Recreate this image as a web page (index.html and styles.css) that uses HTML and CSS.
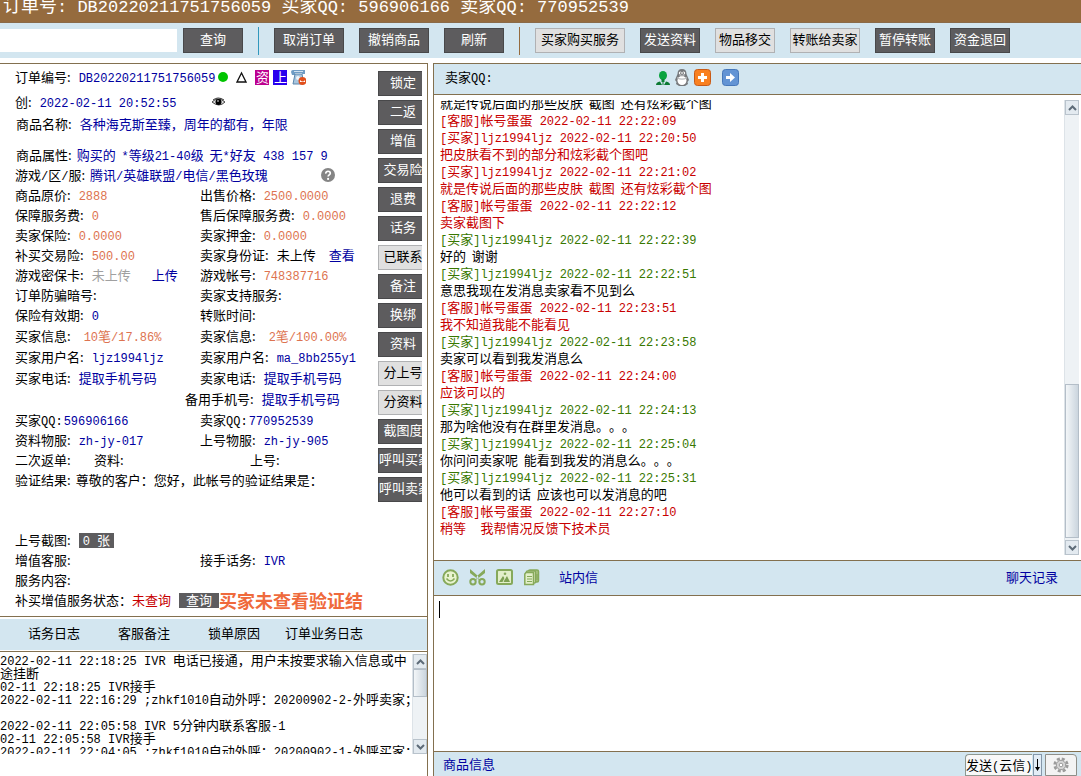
FILE: index.html
```html
<!DOCTYPE html>
<html lang="zh-CN">
<head>
<meta charset="utf-8">
<title>订单处理</title>
<link rel="stylesheet" href="styles.css">
</head>
<body>
<header class="title"><h1>订单号<span class="big">: DB20220211751756059 </span>买家<span class="big">QQ: 596906166 </span>卖家<span class="big">QQ: 770952539</span></h1></header>

<nav class="toolbar">
  <input class="search" type="text" aria-label="订单号">
  <button class="btn w60">查询</button>
  <span class="sep blue"></span>
  <button class="btn w70">取消订单</button>
  <button class="btn w70">撤销商品</button>
  <button class="btn w60">刷新</button>
  <span class="sep"></span>
  <button class="btn light w90">买家购买服务</button>
  <button class="btn w60">发送资料</button>
  <button class="btn light w60">物品移交</button>
  <button class="btn light w70">转账给卖家</button>
  <button class="btn w60">暂停转账</button>
  <button class="btn w60">资金退回</button>
</nav>

<main class="main">
  <section class="left">
    <div class="order">
      <div class="details">
        <div class="row"><span class="lb">订单编号:</span><span class="n v">DB20220211751756059</span>
          <span class="marks">
            <svg width="10" height="10" viewBox="0 0 10 10"><circle cx="5" cy="5" r="5" fill="#00c400"/></svg>
            <svg width="11" height="12" viewBox="0 0 11 12"><path d="M5.500 2 1 11h9z" fill="none" stroke="#111" stroke-width="1.300"/></svg>
            <span class="tag pink">资</span><span class="tag indigo">上</span>
            <svg width="15" height="15" viewBox="0 0 15 15"><path d="M0 2Q0 0 2 0h12v4h-3v-1H4v2H1z" fill="#6f9cc4"/><path d="M3 1h9v1H3z" fill="#cfe0ef"/><path d="M4 4h7l2 10H2z" fill="#a9c6de" stroke="#5c87ad"/><circle cx="7" cy="8" r="2" fill="#eef5fa"/><circle cx="11.500" cy="11" r="4" fill="#e2501c"/><path d="M9 10q3 3 5 0v2H9z" fill="#fff"/></svg>
          </span>
        </div>
        <div class="row g5"><span class="lb">创:</span><time class="n v">2022-02-11 20:52:55</time>
          <svg class="eye" width="13" height="10" viewBox="0 0 13 10"><path d="M0 5Q6-1 13 5 7 11 0 5z" fill="#ddd" stroke="#444"/><circle cx="6.500" cy="5" r="3" fill="#000"/><circle cx="6" cy="4" r=".8" fill="#fff"/><path d="M1 3Q6-1 12 3" fill="none" stroke="#333"/></svg>
        </div>
        <div class="row g2 in"><span class="lb">商品名称:</span><span class="v">各种海克斯至臻，周年的都有，年限</span></div>
        <div class="row g11 in"><span class="lb near">商品属性:</span><span class="v">购买的&nbsp; <span class="n">*</span>等级<span class="n">21-40</span>级&nbsp; 无<span class="n">*</span>好友<span class="n"> 438 157 9</span></span></div>
        <div class="row"><span class="lb near">游戏<span class="n">/</span>区<span class="n">/</span>服:</span><span class="v">腾讯<span class="n">/</span>英雄联盟<span class="n">/</span>电信<span class="n">/</span>黑色玫瑰</span>
          <svg class="help" width="14" height="14" viewBox="0 0 14 14"><circle cx="7" cy="7" r="7" fill="#858585"/><path d="M4.800 5.600C4.600 2.600 9.400 2.500 9.300 5.200 9.200 6.800 7.100 6.900 7.100 8.600" fill="none" stroke="#fff" stroke-width="1.700"/><circle cx="7.100" cy="10.900" r="1.100" fill="#fff"/></svg>
        </div>
        <div class="pair"><div class="row"><span class="lb">商品原价:</span><span class="n o">2888</span></div><div class="row"><span class="lb">出售价格:</span><span class="n o">2500.0000</span></div></div>
        <div class="pair"><div class="row"><span class="lb">保障服务费:</span><span class="n o">0</span></div><div class="row"><span class="lb">售后保障服务费:</span><span class="n o">0.0000</span></div></div>
        <div class="pair"><div class="row"><span class="lb">卖家保险:</span><span class="n o">0.0000</span></div><div class="row"><span class="lb">卖家押金:</span><span class="n o">0.0000</span></div></div>
        <div class="pair"><div class="row"><span class="lb">补买交易险:</span><span class="n o">500.00</span></div><div class="row"><span class="lb">卖家身份证:</span><span>未上传</span><a href="#" class="after">查看</a></div></div>
        <div class="pair"><div class="row"><span class="lb">游戏密保卡:</span><span class="off">未上传</span><a href="#" class="after far">上传</a></div><div class="row"><span class="lb">游戏帐号:</span><span class="n o">748387716</span></div></div>
        <div class="pair"><div class="row"><span class="lb">订单防骗暗号:</span></div><div class="row"><span class="lb">卖家支持服务:</span></div></div>
        <div class="pair"><div class="row"><span class="lb">保险有效期:</span><span class="n v">0</span></div><div class="row"><span class="lb">转账时间:</span></div></div>
        <div class="pair g1"><div class="row"><span class="lb wide">买家信息:</span><span class="o"><span class="n">10</span>笔<span class="n">/17.86%</span></span></div><div class="row"><span class="lb wide">卖家信息:</span><span class="o"><span class="n">2</span>笔<span class="n">/100.00%</span></span></div></div>
        <div class="pair g1"><div class="row"><span class="lb">买家用户名:</span><span class="n v">ljz1994ljz</span></div><div class="row"><span class="lb">卖家用户名:</span><span class="n v">ma_8bb255y1</span></div></div>
        <div class="pair g1"><div class="row"><span class="lb">买家电话:</span><a href="#">提取手机号码</a></div><div class="row"><span class="lb">卖家电话:</span><a href="#">提取手机号码</a></div></div>
        <div class="row g1 spare"><span class="lb">备用手机号:</span><a href="#">提取手机号码</a></div>
        <div class="pair g1"><div class="row"><span class="lb qq">买家<span class="n">QQ:</span></span><span class="n v">596906166</span></div><div class="row"><span class="lb qq">卖家<span class="n">QQ:</span></span><span class="n v">770952539</span></div></div>
        <div class="pair"><div class="row"><span class="lb">资料物服:</span><span class="n v">zh-jy-017</span></div><div class="row"><span class="lb">上号物服:</span><span class="n v">zh-jy-905</span></div></div>
        <div class="triple"><div class="row">二次返单:</div><div class="row">资料:</div><div class="row">上号:</div></div>
        <div class="row"><span class="lb near">验证结果:</span><span>尊敬的客户：您好，此帐号的验证结果是：</span></div>
        <div class="row g40"><span class="lb">上号截图:</span><button class="mini"><span class="n">0 </span>张</button></div>
        <div class="pair"><div class="row"><span class="lb">增值客服:</span></div><div class="row"><span class="lb">接手话务:</span><span class="n v">IVR</span></div></div>
        <div class="row"><span class="lb">服务内容:</span></div>
        <div class="row mid"><span>补买增值服务状态：</span><span class="red">未查询</span><button class="mini query">查询</button><strong class="alert">买家未查看验证结</strong></div>
      </div>
      <div class="side">
        <button class="btn">锁定</button>
        <button class="btn">二返</button>
        <button class="btn">增值</button>
        <button class="btn">交易险</button>
        <button class="btn">退费</button>
        <button class="btn">话务</button>
        <button class="btn light">已联系</button>
        <button class="btn">备注</button>
        <button class="btn">换绑</button>
        <button class="btn">资料</button>
        <button class="btn light">分上号</button>
        <button class="btn light">分资料</button>
        <button class="btn">截图度</button>
        <button class="btn long">呼叫买家</button>
        <button class="btn long">呼叫卖家</button>
      </div>
    </div>
    <div class="tabs"><button>话务日志</button><button>客服备注</button><button>锁单原因</button><button>订单业务日志</button></div>
    <div class="log">
      <div class="loglist">
        <p><span class="n">2022-02-11 22:18:25 IVR </span>电话已接通，用户未按要求输入信息或中</p>
        <p>途挂断</p>
        <p><span class="n">02-11 22:18:25 IVR</span>接手</p>
        <p><span class="n">2022-02-11 22:16:29 ;zhkf1010</span>自动外呼：<span class="n">20200902-2-</span>外呼卖家；</p>
        <p></p>
        <p><span class="n">2022-02-11 22:05:58 IVR 5</span>分钟内联系客服<span class="n">-1</span></p>
        <p><span class="n">02-11 22:05:58 IVR</span>接手</p>
        <p><span class="n">2022-02-11 22:04:05 ;zhkf1010</span>自动外呼：<span class="n">20200902-1-</span>外呼买家；</p>
      </div>
      <div class="bar">
        <span class="cap"><svg width="9" height="6" viewBox="0 0 9 6"><path d="M1 5l3.500-3.500L8 5"/></svg></span>
        <span class="thumb top"></span><span class="track"></span>
        <span class="cap"><svg width="9" height="6" viewBox="0 0 9 6"><path d="M1 1l3.500 3.500L8 1"/></svg></span>
      </div>
    </div>
  </section>

  <section class="right">
    <div class="chathead"><span>卖家<span class="n">QQ:</span></span>
      <span class="people">
        <svg width="14" height="14" viewBox="0 0 14 14"><ellipse cx="7" cy="4.500" rx="4" ry="4.500" fill="#0aa33f"/><path d="M5.500 8h3v3h-3z" fill="#0b8535"/><path d="M0 14q0-3 4-3.500L6 14zM14 14q0-3-4-3.500L8 14z" fill="#0c7a33"/><path d="M6.500 11h1v3h-1z" fill="#0c7a33"/></svg>
        <svg width="16" height="17" viewBox="0 0 16 17"><path d="M3.500 5Q3.500 0 8 0t4.500 5l2.500 6-1.500 2 .5 2-3 2H5l-3-2 .5-2L1 11z" fill="#77797c"/><ellipse cx="8" cy="11.500" rx="4.500" ry="4.500" fill="#fff"/><circle cx="6.300" cy="4" r="1.500" fill="#fff"/><circle cx="9.700" cy="4" r="1.500" fill="#fff"/><circle cx="6.600" cy="4" r=".6"/><circle cx="9.400" cy="4" r=".6"/><path d="M5 6.500h6L8 8z" fill="#ddd"/><path d="M3 8q5 3 10 0v1.500q-5 2.500-10 0z" fill="#b9bbbd"/></svg>
        <svg width="17" height="17" viewBox="0 0 17 17"><rect x=".5" y=".5" width="16" height="16" rx="3" fill="#f98020" stroke="#c85a17"/><path d="M7 4h3v3h3v3h-3v3H7v-3H4V7h3z" fill="#fff"/></svg>
        <svg class="go" width="17" height="17" viewBox="0 0 17 17"><rect x=".5" y=".5" width="16" height="16" rx="3" fill="#6394d4" stroke="#4677b9"/><path d="M4 7h4V4l5 4.500L8 13v-3H4z" fill="#fff"/></svg>
      </span>
    </div>
    <div class="chat">
      <div class="messages">
        <p class="first">就是传说后面的那些皮肤&nbsp; 截图&nbsp; 还有炫彩截个图</p>
        <p class="red"><span class="n">[</span>客服<span class="n">]</span>帐号蛋蛋<span class="n"> 2022-02-11 22:22:09</span></p>
        <p class="red"><span class="n">[</span>买家<span class="n">]ljz1994ljz 2022-02-11 22:20:50</span></p>
        <p class="red">把皮肤看不到的部分和炫彩截个图吧</p>
        <p class="red"><span class="n">[</span>买家<span class="n">]ljz1994ljz 2022-02-11 22:21:02</span></p>
        <p class="red">就是传说后面的那些皮肤&nbsp; 截图&nbsp; 还有炫彩截个图</p>
        <p class="red"><span class="n">[</span>客服<span class="n">]</span>帐号蛋蛋<span class="n"> 2022-02-11 22:22:12</span></p>
        <p class="red">卖家截图下</p>
        <p class="green"><span class="n">[</span>买家<span class="n">]ljz1994ljz 2022-02-11 22:22:39</span></p>
        <p>好的&nbsp; 谢谢</p>
        <p class="green"><span class="n">[</span>买家<span class="n">]ljz1994ljz 2022-02-11 22:22:51</span></p>
        <p>意思我现在发消息卖家看不见到么</p>
        <p class="red"><span class="n">[</span>客服<span class="n">]</span>帐号蛋蛋<span class="n"> 2022-02-11 22:23:51</span></p>
        <p class="red">我不知道我能不能看见</p>
        <p class="green"><span class="n">[</span>买家<span class="n">]ljz1994ljz 2022-02-11 22:23:58</span></p>
        <p>卖家可以看到我发消息么</p>
        <p class="red"><span class="n">[</span>客服<span class="n">]</span>帐号蛋蛋<span class="n"> 2022-02-11 22:24:00</span></p>
        <p class="red">应该可以的</p>
        <p class="green"><span class="n">[</span>买家<span class="n">]ljz1994ljz 2022-02-11 22:24:13</span></p>
        <p>那为啥他没有在群里发消息。。。</p>
        <p class="green"><span class="n">[</span>买家<span class="n">]ljz1994ljz 2022-02-11 22:25:04</span></p>
        <p>你问问卖家呢&nbsp; 能看到我发的消息么。。。</p>
        <p class="green"><span class="n">[</span>买家<span class="n">]ljz1994ljz 2022-02-11 22:25:31</span></p>
        <p>他可以看到的话&nbsp; 应该也可以发消息的吧</p>
        <p class="red"><span class="n">[</span>客服<span class="n">]</span>帐号蛋蛋<span class="n"> 2022-02-11 22:27:10</span></p>
        <p class="red">稍等<span class="n">&nbsp; </span>我帮情况反馈下技术员</p>
      </div>
      <div class="bar">
        <span class="cap"><svg width="9" height="6" viewBox="0 0 9 6"><path d="M1 5l3.500-3.500L8 5"/></svg></span>
        <span class="track"></span><span class="thumb low"></span>
        <span class="cap"><svg width="9" height="6" viewBox="0 0 9 6"><path d="M1 1l3.500 3.500L8 1"/></svg></span>
      </div>
    </div>
    <div class="tools">
      <button class="ico" aria-label="表情"><svg width="17" height="17" viewBox="0 0 17 17"><circle cx="8.500" cy="8.500" r="7.200" fill="#e8f3cf" stroke="#86a95a" stroke-width="2"/><path d="M6 5v3M11 5v3" stroke="#86a95a" stroke-width="1.800"/><path d="M4.500 9.500q4 5 8 0" fill="none" stroke="#86a95a" stroke-width="1.600"/></svg></button>
      <button class="ico" aria-label="截图"><svg width="17" height="17" viewBox="0 0 17 17" fill="none" stroke="#86a95a" stroke-width="2"><path d="M1 0v4l9 7-1-4zM16 0v4l-9 7 1-4z" fill="#86a95a" stroke="none"/><circle cx="4" cy="12.800" r="2.700"/><circle cx="13" cy="12.800" r="2.700"/></svg></button>
      <button class="ico" aria-label="图片"><svg width="17" height="17" viewBox="0 0 17 17"><rect x="1" y="1" width="15" height="14" rx="1.500" fill="#e3efca" stroke="#86a95a" stroke-width="2"/><path d="M3 13l4-6 2 3 2-3 3 6z" fill="#7da052"/><path d="M7 13l2-4" stroke="#e3efca"/><circle cx="9" cy="4.700" r="1.300" fill="#86a95a"/></svg></button>
      <button class="ico" aria-label="文件"><svg width="17" height="17" viewBox="0 0 17 17" fill="#e3efca" stroke="#86a95a" stroke-width="1.500"><rect x="5.500" y="1" width="10" height="12" rx="1.500" fill="#a7c27f"/><rect x="3.500" y="2" width="9" height="12" rx="1"/><path d="M3 3.500h7.500v12H1.800V5z"/><path d="M4 7.500h5M4 10h5M4 12.500h5M14 5v6" stroke-width="1.200"/></svg></button>
      <a href="#" class="mail">站内信</a><a href="#" class="history">聊天记录</a>
    </div>
    <div class="editor"><span class="caret"></span><textarea aria-label="消息"></textarea></div>
    <div class="foot"><a href="#">商品信息</a>
      <button class="send">发送<span class="n">(</span>云信<span class="n">)</span></button>
      <button class="drop" aria-label="更多"><svg width="5" height="12" viewBox="0 0 5 12"><path d="M2.500 0v10" stroke="#000"/><path d="M0 8h5l-2.500 4z"/></svg></button>
      <button class="gear" aria-label="设置"><svg width="16" height="16" viewBox="0 0 16 16" fill="none" stroke="#9b9b9b"><circle cx="8" cy="8" r="6.300" stroke-width="2.600" stroke-dasharray="3 1.950"/><circle cx="8" cy="8" r="4.700" fill="#d5d5d5"/><circle cx="8" cy="8" r="1.800" fill="#fff"/></svg></button>
    </div>
  </section>
</main>
</body>
</html>
```
FILE: styles.css
```css
* { box-sizing: border-box; }
body {
  margin: 0;
  height: 100vh;
  overflow: hidden;
  display: flex;
  flex-direction: column;
  background: #fff;
  color: #000;
  font: 13px/20px "Noto Sans CJK SC", sans-serif;
  text-spacing-trim: space-all;
  white-space: nowrap;
}
p, h1 { margin: 0; }
a { color: #0000a0; text-decoration: none; }
button, input, textarea { font: inherit; color: inherit; }
button { padding: 0; border: 0; background: none; white-space: nowrap; }
svg { display: block; flex: none; }

.n { font: 12px "Liberation Mono", "Noto Sans CJK SC", monospace; line-height: inherit; }
.v { color: #0000a0; }
.o { color: #dd7350; }
.off { color: #a0a0a0; }
.red { color: #c80000; }
.green { color: #387800; }

.title {
  height: 23px;
  flex: none;
  padding-left: 3px;
  overflow: hidden;
  background: #956b3e;
  border-bottom: 1px solid #8a6a48;
  color: #fff;
}
.title h1 { margin-top: -7px; font-size: 18px; font-weight: 400; line-height: 22px; }
.big { font: 17px "Liberation Mono", monospace; line-height: inherit; white-space: pre; }

.toolbar {
  display: flex;
  flex: none;
  align-items: center;
  gap: 15px;
  height: 35px;
  background: #d3e6f0;
}
.search { width: 177px; height: 23px; margin-right: -9px; padding: 0 4px; border: 0; background: #fff; }
.sep { width: 1px; height: 28px; background: #956b3e; }
.sep.blue { background: #3098bd; }
.btn {
  display: flex;
  flex: none;
  align-items: center;
  justify-content: center;
  height: 25px;
  padding-bottom: 3px;
  border: 1px solid #48484a;
  background: #5d5c5e;
  color: #fff;
  line-height: 20px;
}
.btn.light { border-color: #b0b1b3; background: #e0e0e0; color: #000; }
.w60 { width: 60px; }
.w70 { width: 70px; }
.w90 { width: 90px; }

.main { display: flex; flex: 1; gap: 5px; min-height: 0; margin-top: 5px; }
.left {
  display: flex;
  flex-direction: column;
  flex: none;
  width: 428px;
  border: solid #83704f;
  border-width: 1px 1px 0 0;
}
.order { display: flex; flex: none; border-bottom: 1px solid #83704f; }
.details { width: 378px; padding: 3px 0 6px 15px; }
.row { display: flex; align-items: baseline; height: 20px; }
.row.mid { align-items: center; }
.row svg { align-self: center; }
.pair { display: grid; grid-template-columns: 185px 1fr; }
.triple { display: grid; grid-template-columns: 79px 156px 1fr; }
.lb { margin-right: 8px; }
.lb.near { margin-right: 5px; }
.lb.qq { margin-right: 1px; }
.lb.wide { margin-right: 13px; }
.g1 { margin-top: 1px; }
.g2 { margin-top: 2px; }
.g5 { margin-top: 5px; }
.g11 { margin-top: 11px; }
.g40 { margin-top: 40px; }
.in { padding-left: 1px; }
.spare { padding-left: 170px; }
.after { margin-left: 13px; }
.after.far { margin-left: 21px; }
.marks { display: flex; align-self: center; align-items: center; gap: 4px; margin-left: 3px; }
.marks svg:nth-child(2) { margin: 0 4px; }
.tag { width: 14px; height: 15px; color: #fff; line-height: 14px; text-align: center; }
.pink { background: #bd008f; }
.indigo { background: #2800ee; }
.eye { margin-left: 36px; }
.help { margin-left: 53px; }
.mini { align-self: center; height: 15px; padding: 0 4px; background: #5d5c5e; color: #fff; line-height: 14px; }
.query { width: 40px; margin-left: 8px; }
.alert { color: #ef6a3c; font-size: 18px; }

.side { display: flex; flex-direction: column; gap: 4px; width: 44px; padding-top: 7px; overflow: hidden; }
.side .btn { width: 50px; }
.side .long { justify-content: flex-start; }

.tabs { display: flex; flex: none; height: 31px; margin-top: 2px; padding: 0 0 4px 9px; background: #d3e6f0; }
.tabs button { width: 90px; }
.log { display: flex; flex: none; height: 103px; margin-top: 1px; padding-top: 2px; border-top: 1px solid #83704f; }
.loglist { flex: 1; overflow: hidden; line-height: 13px; }
.loglist p { height: 13px; }
.loglist p:first-child { margin-top: -1px; }

.bar { display: flex; flex-direction: column; flex: none; width: 15px; background: #eef2f5; border-left: 1px solid #dde3e8; }
.cap {
  display: grid;
  place-items: center;
  flex: none;
  height: 15px;
  background: #e3eaf0;
  border: 1px solid #b9c3cc;
}
.cap path { fill: none; stroke: #5d6b78; stroke-width: 2; }
.thumb { flex: none; border: 1px solid #b4bec8; background: linear-gradient(90deg, #f3f6f8, #cbd5de); }
.thumb.top { height: 28px; }
.thumb.low { height: 154px; margin-bottom: 2px; }
.track { flex: 1; }

.right {
  display: flex;
  flex-direction: column;
  flex: 1;
  min-width: 0;
  border: solid #83704f;
  border-width: 1px 0 0 1px;
}
.chathead {
  display: flex;
  align-items: center;
  flex: none;
  height: 31px;
  padding: 0 0 3px 11px;
  background: #d3e6f0;
  border-bottom: 1px solid #83704f;
}
.people { display: flex; align-items: center; gap: 4px; margin-left: 163px; }
.go { margin-left: 7px; }
.chat { display: flex; flex: none; padding: 5px 2px 5px 6px; border-bottom: 1px solid #83704f; }
.messages { flex: 1; overflow: hidden; padding-bottom: 19px; line-height: 17px; }
.messages p { height: 17px; }
.messages .first { margin-top: -6px; }
.tools {
  display: flex;
  align-items: center;
  flex: none;
  gap: 10px;
  height: 35px;
  padding: 0 23px 2px 8px;
  background: #d3e6f0;
  border-bottom: 1px solid #83704f;
}
.mail { margin-left: 9px; }
.history { margin-left: auto; }
.editor { display: flex; flex: 1; min-height: 0; padding: 5px 0 0 5px; }
.caret { width: 1px; height: 17px; background: #000; }
textarea { flex: 1; padding: 0; border: 0; outline: 0; resize: none; background: #fff; }
.foot {
  display: flex;
  flex: none;
  height: 25px;
  padding: 2px 4px 0 9px;
  background: #d3e6f0;
  border-top: 1px solid #83704f;
}
.send { width: 67px; margin-left: auto; border: 1px solid #8e9890; border-right: 0; border-radius: 4px 0 0 0; background: #f8f8f8; }
.drop { display: grid; place-items: center; width: 9px; margin: 0 3px 0 1px; border: 1px solid #8597a8; background: #e3edf6; }
.gear { display: grid; place-items: center; width: 32px; border: 1px solid #8e8e88; border-radius: 0 4px 0 0; background: #f3f3f3; }
```
